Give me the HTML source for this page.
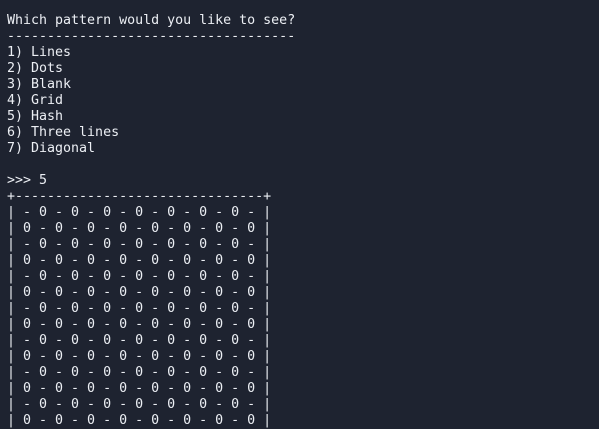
<!DOCTYPE html>
<html><head><meta charset="utf-8"><style>
html,body{margin:0;padding:0;background:#1e2330;width:599px;height:429px;overflow:hidden}
pre{margin:0;padding:13px 0 0 7px;font-family:"DejaVu Sans Mono","Liberation Mono",monospace;font-size:13.3px;line-height:16px;color:#eceff4}
</style></head><body><pre>Which pattern would you like to see?
------------------------------------
1) Lines
2) Dots
3) Blank
4) Grid
5) Hash
6) Three lines
7) Diagonal

&gt;&gt;&gt; 5
+-------------------------------+
| - 0 - 0 - 0 - 0 - 0 - 0 - 0 - |
| 0 - 0 - 0 - 0 - 0 - 0 - 0 - 0 |
| - 0 - 0 - 0 - 0 - 0 - 0 - 0 - |
| 0 - 0 - 0 - 0 - 0 - 0 - 0 - 0 |
| - 0 - 0 - 0 - 0 - 0 - 0 - 0 - |
| 0 - 0 - 0 - 0 - 0 - 0 - 0 - 0 |
| - 0 - 0 - 0 - 0 - 0 - 0 - 0 - |
| 0 - 0 - 0 - 0 - 0 - 0 - 0 - 0 |
| - 0 - 0 - 0 - 0 - 0 - 0 - 0 - |
| 0 - 0 - 0 - 0 - 0 - 0 - 0 - 0 |
| - 0 - 0 - 0 - 0 - 0 - 0 - 0 - |
| 0 - 0 - 0 - 0 - 0 - 0 - 0 - 0 |
| - 0 - 0 - 0 - 0 - 0 - 0 - 0 - |
| 0 - 0 - 0 - 0 - 0 - 0 - 0 - 0 |
| - 0 - 0 - 0 - 0 - 0 - 0 - 0 - |
</pre></body></html>
